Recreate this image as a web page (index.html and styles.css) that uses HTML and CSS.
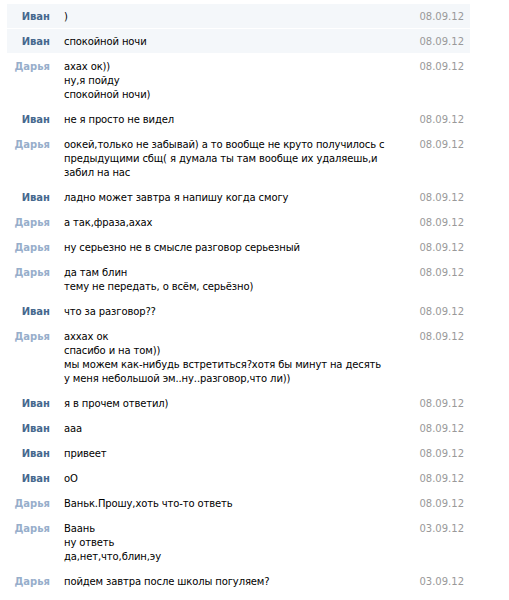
FILE: index.html
```html
<!DOCTYPE html>
<html lang="ru">
<head>
<meta charset="utf-8">
<link rel="stylesheet" href="styles.css">
</head>
<body>
<div class="list">
  <div class="row unread"><div class="name me">Иван</div><div class="text">)</div><div class="date">08.09.12</div></div>
  <div class="row unread"><div class="name me">Иван</div><div class="text">спокойной ночи</div><div class="date">08.09.12</div></div>
  <div class="row"><div class="name she">Дарья</div><div class="text">ахах ок))<br>ну,я пойду<br>спокойной ночи)</div><div class="date">08.09.12</div></div>
  <div class="row"><div class="name me">Иван</div><div class="text">не я просто не видел</div><div class="date">08.09.12</div></div>
  <div class="row"><div class="name she">Дарья</div><div class="text">оокей,только не забывай) а то вообще не круто получилось с<br>предыдущими сбщ( я думала ты там вообще их удаляешь,и<br>забил на нас</div><div class="date">08.09.12</div></div>
  <div class="row"><div class="name me">Иван</div><div class="text">ладно может завтра я напишу когда смогу</div><div class="date">08.09.12</div></div>
  <div class="row"><div class="name she">Дарья</div><div class="text">а так,фраза,ахах</div><div class="date">08.09.12</div></div>
  <div class="row"><div class="name she">Дарья</div><div class="text">ну серьезно не в смысле разговор серьезный</div><div class="date">08.09.12</div></div>
  <div class="row"><div class="name she">Дарья</div><div class="text">да там блин<br>тему не передать, о всём, серьёзно)</div><div class="date">08.09.12</div></div>
  <div class="row"><div class="name me">Иван</div><div class="text">что за разговор??</div><div class="date">08.09.12</div></div>
  <div class="row"><div class="name she">Дарья</div><div class="text">аххах ок<br>спасибо и на том))<br>мы можем как-нибудь встретиться?хотя бы минут на десять<br>у меня небольшой эм..ну..разговор,что ли))</div><div class="date">08.09.12</div></div>
  <div class="row"><div class="name me">Иван</div><div class="text">я в прочем ответил)</div><div class="date">08.09.12</div></div>
  <div class="row"><div class="name me">Иван</div><div class="text">ааа</div><div class="date">08.09.12</div></div>
  <div class="row"><div class="name me">Иван</div><div class="text">привеет</div><div class="date">08.09.12</div></div>
  <div class="row"><div class="name me">Иван</div><div class="text">оО</div><div class="date">08.09.12</div></div>
  <div class="row"><div class="name she">Дарья</div><div class="text">Ваньк.Прошу,хоть что-то ответь</div><div class="date">08.09.12</div></div>
  <div class="row"><div class="name she">Дарья</div><div class="text">Ваань<br>ну ответь<br>да,нет,что,блин,эу</div><div class="date">03.09.12</div></div>
  <div class="row"><div class="name she">Дарья</div><div class="text">пойдем завтра после школы погуляем?</div><div class="date">03.09.12</div></div>
</div>
</body>
</html>
```
FILE: styles.css
```css
html, body {
  background: #fff;
}
body {
  margin: 4px 0 0 7px;
  font-family: "DejaVu Sans", Verdana, sans-serif;
  font-size: 10px;
  line-height: 14px;
  color: #000;
}
.list {
  width: 463px;
}
.row {
  display: grid;
  grid-template-columns: 43px minmax(0, 1fr) 60px;
  column-gap: 14px;
  padding: 6px 6px 4px 0;
  border-bottom: 1px solid #fff;
}
.row.unread {
  background: #f4f7fa;
}
.name {
  text-align: right;
  font-weight: bold;
  white-space: nowrap;
}
.me { color: #45688e; }
.she { color: #97aecb; }
.text {
  white-space: nowrap;
  letter-spacing: -0.12px;
}
.date {
  text-align: right;
  color: #999;
}
```
